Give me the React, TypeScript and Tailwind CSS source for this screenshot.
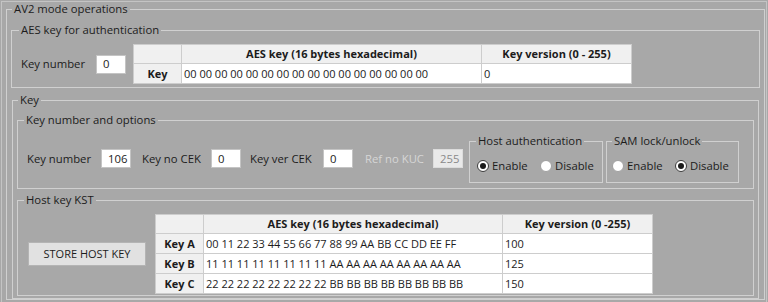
import React from 'react'

type Row = { label: string; key: string; version: string }

const authRows: Row[] = [
  { label: 'Key', key: '00 00 00 00 00 00 00 00 00 00 00 00 00 00 00 00', version: '0' },
]

const hostRows: Row[] = [
  { label: 'Key A', key: '00 11 22 33 44 55 66 77 88 99 AA BB CC DD EE FF', version: '100' },
  { label: 'Key B', key: '11 11 11 11 11 11 11 11 AA AA AA AA AA AA AA AA', version: '125' },
  { label: 'Key C', key: '22 22 22 22 22 22 22 22 BB BB BB BB BB BB BB BB', version: '150' },
]

function KeyGrid({ rows, versionTitle, keyWidth }: { rows: Row[]; versionTitle: string; keyWidth: string }) {
  return (
    <div className="flex flex-col border-l border-t border-[#cdcdcd] text-[11px]">
      <div className="flex h-[19px]">
        <div className="w-[48px] border-b border-r border-[#cdcdcd] bg-[#f0f0f0]" />
        <div className={`${keyWidth} flex items-center justify-center border-b border-r border-[#cdcdcd] bg-[#f0f0f0] font-bold`}>
          AES key (16 bytes hexadecimal)
        </div>
        <div className="flex w-[150px] items-center justify-center border-b border-r border-[#cdcdcd] bg-[#f0f0f0] font-bold">
          {versionTitle}
        </div>
      </div>
      {rows.map((r) => (
        <div key={r.label} className="flex h-[20px]">
          <div className="flex w-[48px] items-center justify-center border-b border-r border-[#cdcdcd] bg-[#f0f0f0] font-bold">
            {r.label}
          </div>
          <div className={`${keyWidth} flex items-center border-b border-r border-[#cdcdcd] bg-white pl-[2px]`}>{r.key}</div>
          <div className="flex w-[150px] items-center border-b border-r border-[#cdcdcd] bg-white pl-[2px]">{r.version}</div>
        </div>
      ))}
    </div>
  )
}

function TextBox({ value, disabled }: { value: string; disabled?: boolean }) {
  return (
    <div
      className={`flex h-[19px] w-[30px] items-center pl-[6px] ${
        disabled ? 'border border-[#dcdcdc] bg-[#e9e9e9] text-[#8a8a8a]' : 'border border-[#c4c4c4] bg-white'
      }`}
    >
      {value}
    </div>
  )
}

function Radio({ label, checked }: { label: string; checked?: boolean }) {
  return (
    <div className="flex items-center">
      <span
        className={`flex h-[12px] w-[12px] items-center justify-center rounded-full border bg-white ${
          checked ? 'border-[#3c3c3c]' : 'border-[#a0a0a0]'
        }`}
      >
        {checked && <span className="h-[6px] w-[6px] rounded-full bg-[#1a1a1a]" />}
      </span>
      <span className="ml-[3px]">{label}</span>
    </div>
  )
}

export default function App() {
  return (
    <div className="h-[302px] w-[768px] overflow-hidden bg-[#a8a8a8] px-[1px] pt-[1px] font-['Open_Sans',sans-serif] text-[11.3px] leading-[14px] text-[#1c1c1c]">
      <div className="h-[320px] border border-[#c4c4c4]">
        <fieldset className="ml-[4px] mr-[1px] border border-[#d0d0d0]">
          <legend className="ml-[5px] px-[2px] leading-[14px]">AV2 mode operations</legend>

          <fieldset className="mx-[4px] mt-[7px] border border-[#d0d0d0]">
            <legend className="ml-[7px] px-[2px] leading-[14px]">AES key for authentication</legend>
            <div className="flex items-center pb-[3px] pl-[9px] pt-[7px]">
              <span className="w-[75px]">Key number</span>
              <TextBox value="0" />
              <div className="ml-[7px]">
                <KeyGrid rows={authRows} versionTitle="Key version (0 - 255)" keyWidth="w-[300px]" />
              </div>
            </div>
          </fieldset>

          <fieldset className="ml-[5px] mr-[5px] mt-[5px] border border-[#d0d0d0]">
            <legend className="ml-[5px] px-[2px] leading-[14px]">Key</legend>
            <div className="px-[4px] pb-[2px]">
              <fieldset className="mt-[6px] border border-[#d0d0d0]">
                <legend className="ml-[6px] px-[2px] leading-[14px]">Key number and options</legend>
                <div className="flex items-center pb-[5px] pl-[9px] pt-[7px]">
                  <span className="w-[74px]">Key number</span>
                  <TextBox value="106" />
                  <span className="ml-[11px] w-[69px]">Key no CEK</span>
                  <TextBox value="0" />
                  <span className="ml-[9px] w-[73px]">Key ver CEK</span>
                  <TextBox value="0" />
                  <span className="ml-[12px] w-[68px] text-[#d6d6d6]">Ref no KUC</span>
                  <TextBox value="255" disabled />
                  <fieldset className="ml-[6px] w-[134px] border border-[#d0d0d0]">
                    <legend className="ml-[6px] px-[2px] leading-[14px]">Host authentication</legend>
                    <div className="flex h-[14px] pl-[7px] mt-[11px] mb-[9px]">
                      <div className="w-[63px]">
                        <Radio label="Enable" checked />
                      </div>
                      <Radio label="Disable" />
                    </div>
                  </fieldset>
                  <fieldset className="ml-[3px] w-[133px] border border-[#d0d0d0]">
                    <legend className="ml-[5px] px-[2px] leading-[14px]">SAM lock/unlock</legend>
                    <div className="flex h-[14px] pl-[5px] mt-[11px] mb-[9px]">
                      <div className="w-[63px]">
                        <Radio label="Enable" />
                      </div>
                      <Radio label="Disable" checked />
                    </div>
                  </fieldset>
                </div>
              </fieldset>

              <fieldset className="mt-[4px] border border-[#d0d0d0]">
                <legend className="ml-[6px] px-[2px] leading-[14px]">Host key KST</legend>
                <div className="flex items-center pb-[1px] pl-[10px] pt-[7px]">
                  <button
                    type="button"
                    className="h-[24px] w-[118px] border border-[#b4b4b4] bg-[#e1e1e1] text-[11px] text-[#1c1c1c]"
                  >
                    STORE HOST KEY
                  </button>
                  <div className="ml-[9px]">
                    <KeyGrid rows={hostRows} versionTitle="Key version (0 -255)" keyWidth="w-[299px]" />
                  </div>
                </div>
              </fieldset>
            </div>
          </fieldset>
        </fieldset>
      </div>
    </div>
  )
}
